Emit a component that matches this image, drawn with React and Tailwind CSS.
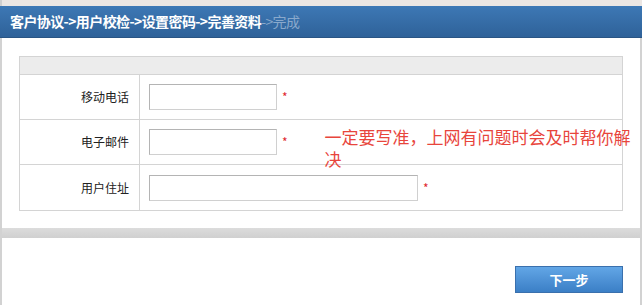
import React from "react";

const cjk = { fontFamily: '"Noto Sans CJK SC", "Liberation Sans", sans-serif' };

const Star = () => <span className="ml-[5px] text-[12px] leading-none text-[#e0282e]">*</span>;

const Field = ({ label, width, children, last }) => (
  <div className={`flex h-[45px] ${last ? "" : "border-b border-[#d4d4d4]"}`}>
    <div className="flex w-[120px] shrink-0 items-center justify-end border-r border-[#d4d4d4] pr-[10px] text-[12px] text-[#222]">
      {label}
    </div>
    <div className="flex items-center pl-[9px]">
      <div
        className={`${width} h-[26px] border border-[#d0d0d0] border-t-[#b4b4b4] border-l-[#b4b4b4] bg-white`}
      />
      <Star />
      {children}
    </div>
  </div>
);

export default function App() {
  return (
    <div className="h-[305px] w-[642px] overflow-hidden bg-white" style={cjk}>
      {/* top strip */}
      <div className="h-[6px] border-l-2 border-[#cfcfcf] bg-[#ebe6e3]" />

      {/* step header */}
      <div className="flex h-[32px] items-center border-b border-[#2a5584] bg-gradient-to-b from-[#3d78b5] to-[#2f6299] pl-[10px] pb-[1px] text-[14px] font-bold tracking-[-0.6px]">
        <span className="text-white">客户协议-&gt;用户校检-&gt;设置密码-&gt;完善资料</span>
        <span className="font-normal text-[#89a9cc]">-&gt;完成</span>
      </div>

      {/* body */}
      <div className="border-l-2 border-r-2 border-[#d2d2d2] pt-[18px]">
        <div className="ml-[17px] w-[604px] border border-[#d4d4d4]">
          <div className="h-[18px] border-b border-[#d4d4d4] bg-[#ececec]" />
          <Field label="移动电话" width="w-[128px]" />
          <Field label="电子邮件" width="w-[128px]">
            <div className="ml-[37px] h-[39px] w-[310px] self-start pt-[6px] text-[17px] leading-[22px] text-[#e8453c]">
              一定要写准，上网有问题时会及时帮你解决
            </div>
          </Field>
          <Field label="用户住址" width="w-[269px]" last />
        </div>

        <div className="mt-[17px] h-[10px] bg-gradient-to-b from-[#dcdcdc] to-[#d0d0d0]" />

        <div className="flex h-[67px] justify-end pr-[17px] pt-[28px]">
          <button className="flex h-[27px] w-[108px] items-center justify-center border border-[#3a70ad] bg-gradient-to-b from-[#62a6e6] to-[#3b7fc6] text-[13px] font-bold text-white">
            下一步
          </button>
        </div>
      </div>
    </div>
  );
}
